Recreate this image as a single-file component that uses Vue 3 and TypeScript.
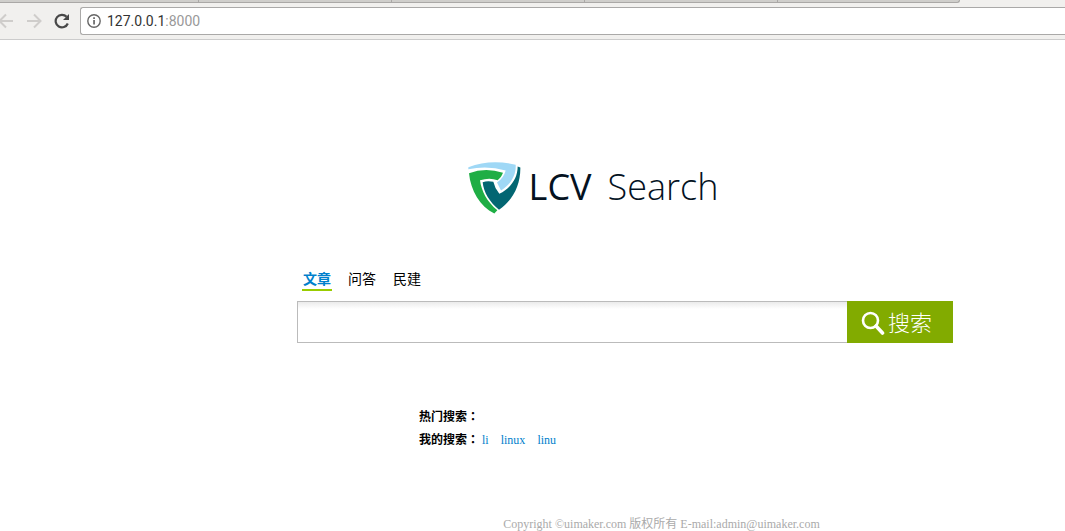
<script setup lang="ts">
import { ref } from 'vue'

const tabs: string[] = ['文章', '问答', '民建']
const active = ref(0)
const query = ref('')
const history: string[] = ['li', 'linux', 'linu']
const browserTabs: number[] = [1, 2, 3, 4, 5]
</script>

<template>
  <div class="page">
    <header class="browser">
      <div class="tab-strip">
        <span v-for="t in browserTabs" :key="t" class="browser-tab"></span>
      </div>
      <div class="toolbar">
        <button class="nav" type="button" aria-label="Back">
          <svg width="16" height="16" viewBox="0 0 16 16" fill="none" stroke="#cfcdcb" stroke-width="2"><path d="M15 8H2M8 1.500L1.500 8L8 14.500" /></svg>
        </button>
        <button class="nav" type="button" aria-label="Forward">
          <svg width="16" height="16" viewBox="0 0 16 16" fill="none" stroke="#cfcdcb" stroke-width="2"><path d="M1 8H14M8 1.500L14.500 8L8 14.500" /></svg>
        </button>
        <button class="nav" type="button" aria-label="Reload">
          <svg width="16" height="16" viewBox="0 0 16 16"><path d="M13.800 10.500A6.300 6.300 0 1 1 12.600 3.800" fill="none" stroke="#484848" stroke-width="2.200" /><path d="M15 1V7H9Z" fill="#484848" /></svg>
        </button>
        <div class="address">
          <svg width="14" height="14" viewBox="0 0 14 14"><circle cx="7" cy="7" r="6.200" fill="none" stroke="#666" stroke-width="1.400" /><path d="M6.200 6h1.700v4.500H6.200zM6.200 3.300h1.700v1.600H6.200z" fill="#666" /></svg>
          <span class="url">127.0.0.1<span class="port">:8000</span></span>
        </div>
      </div>
    </header>

    <main class="content">
      <h1 class="logo">
        <svg class="shield" width="53" height="53" viewBox="19 19 159 156">
          <path d="M20 36Q88 10 162 29C164 60 147 88 118 106L106 82Q126 69 132 46Q78 30 20 42Z" fill="#9fd8f6" />
          <path d="M22 54Q72 35 124 53C120 63 116 69 108 75Q84 66 55 75C59 106 75 139 107 165L98 175C55 153 27 106 22 54Z" fill="#1fae45" />
          <path d="M168 34L176 37C177 91 153 136 112 164C84 140 66 112 63 81Q78 76 95 80Q99 99 113 116C148 98 168 69 168 34Z" fill="#036672" />
        </svg>
        <span class="brand">LCV</span>
        <span class="product">Search</span>
      </h1>

      <form class="search" @submit.prevent>
        <div class="kinds">
          <button
            v-for="(tab, i) in tabs"
            :key="tab"
            type="button"
            class="kind"
            :class="{ active: active === i }"
            @click="active = i"
          >{{ tab }}</button>
        </div>
        <div class="bar">
          <input v-model="query" class="query" type="text" aria-label="搜索" />
          <button class="submit" type="submit">
            <svg width="24" height="24" viewBox="0 0 24 24" fill="none" stroke="#fff"><circle cx="9.500" cy="9.500" r="7.500" stroke-width="2.600" /><path d="M15 15L21.500 22" stroke-width="3.600" stroke-linecap="round" /></svg>
            <span>搜索</span>
          </button>
        </div>
      </form>

      <section class="recent">
        <p><strong>热门搜索<span class="colon">：</span></strong></p>
        <p>
          <strong>我的搜索<span class="colon">：</span></strong>
          <a v-for="item in history" :key="item" href="#">{{ item }}</a>
        </p>
      </section>

      <footer class="footer">Copyright ©uimaker.com 版权所有 E-mail:admin@uimaker.com</footer>
    </main>
  </div>
</template>

<style>
body {
  background: #fff;
  overflow: hidden;
}
</style>

<style scoped>
button {
  border: 0;
  padding: 0;
  background: none;
  cursor: pointer;
}
.browser {
  background: #f1f0ee;
  border-bottom: 1px solid #ccc;
}
.tab-strip {
  display: flex;
  height: 3px;
}
.browser-tab {
  box-sizing: border-box;
  flex: 0 0 193px;
  background: #cfcecb;
  border-right: 1px solid #aaa8a6;
  border-bottom: 1px solid #aaa8a6;
}
.browser-tab:first-child {
  flex-basis: 199px;
}
.browser-tab:nth-child(5) {
  flex-basis: 182px;
  border-bottom-right-radius: 3px;
}
.toolbar {
  display: flex;
  align-items: center;
  gap: 12px;
  padding: 4px 0;
  margin-left: -2px;
}
.nav {
  width: 16px;
  height: 16px;
}
.nav svg {
  display: block;
}
.address {
  box-sizing: border-box;
  flex: 1;
  display: flex;
  align-items: center;
  gap: 6px;
  height: 28px;
  margin-left: -2px;
  padding-left: 6px;
  background: #fff;
  border: 1px solid #aaa9a8;
  border-right: 0;
  border-radius: 3px 0 0 3px;
}
.url {
  font: 14px Roboto, "Noto Sans", sans-serif;
  color: #333;
}
.port {
  color: #999;
}
.content {
  display: flex;
  flex-direction: column;
  align-items: center;
  padding-left: 185px;
}
.logo {
  display: flex;
  align-items: center;
  height: 54px;
  margin: 120px 64px 0 0;
  font-family: "Open Sans", "Noto Sans", sans-serif;
  font-size: 36px;
  line-height: 54px;
  color: #04121f;
}
.brand {
  margin-left: 8px;
  font-weight: 500;
}
.product {
  margin-left: 16px;
  font-weight: 300;
}
.search {
  width: 656px;
  margin-top: 55px;
}
.kinds {
  display: flex;
  gap: 15px;
  padding-left: 5px;
}
.kind {
  width: 30px;
  height: 22px;
  border-bottom: 2px solid transparent;
  font: 14px/20px "Liberation Sans", "Noto Sans CJK SC", sans-serif;
  color: #000;
}
.kind.active {
  border-bottom-color: #9c0;
  font-weight: 700;
  color: #0080cc;
}
.bar {
  display: flex;
  height: 42px;
  margin-top: 10px;
}
.query {
  box-sizing: border-box;
  flex: 1;
  min-width: 0;
  padding: 0 8px;
  border: 1px solid #bbb;
  border-right: 0;
  border-radius: 0;
  outline: 0;
  background: linear-gradient(#ebebeb, #fff 7px);
  font: 16px "Liberation Sans", "Noto Sans CJK SC", sans-serif;
}
.submit {
  display: flex;
  align-items: center;
  gap: 3px;
  width: 106px;
  padding: 0 0 2px 14px;
  background: #82ab00;
  color: #fff;
  font: 300 22px/36px "Noto Sans CJK SC", sans-serif;
}
.submit svg {
  margin-top: 4px;
}
.recent {
  width: 412px;
  margin-top: 63px;
  font: 12px/23px "Liberation Serif", "Noto Sans CJK SC", serif;
}
.recent p {
  display: flex;
  gap: 12px;
  margin: 0;
}
.recent strong {
  margin-right: -9px;
}
.colon {
  font-family: "Noto Sans CJK TC", sans-serif;
  line-height: 1;
}
.recent a {
  color: #0080cc;
  text-decoration: none;
}
.footer {
  margin: 63px 0 0 73px;
  font: 12px/18px "Liberation Serif", "Noto Sans CJK SC", serif;
  color: #aaa;
}
</style>
